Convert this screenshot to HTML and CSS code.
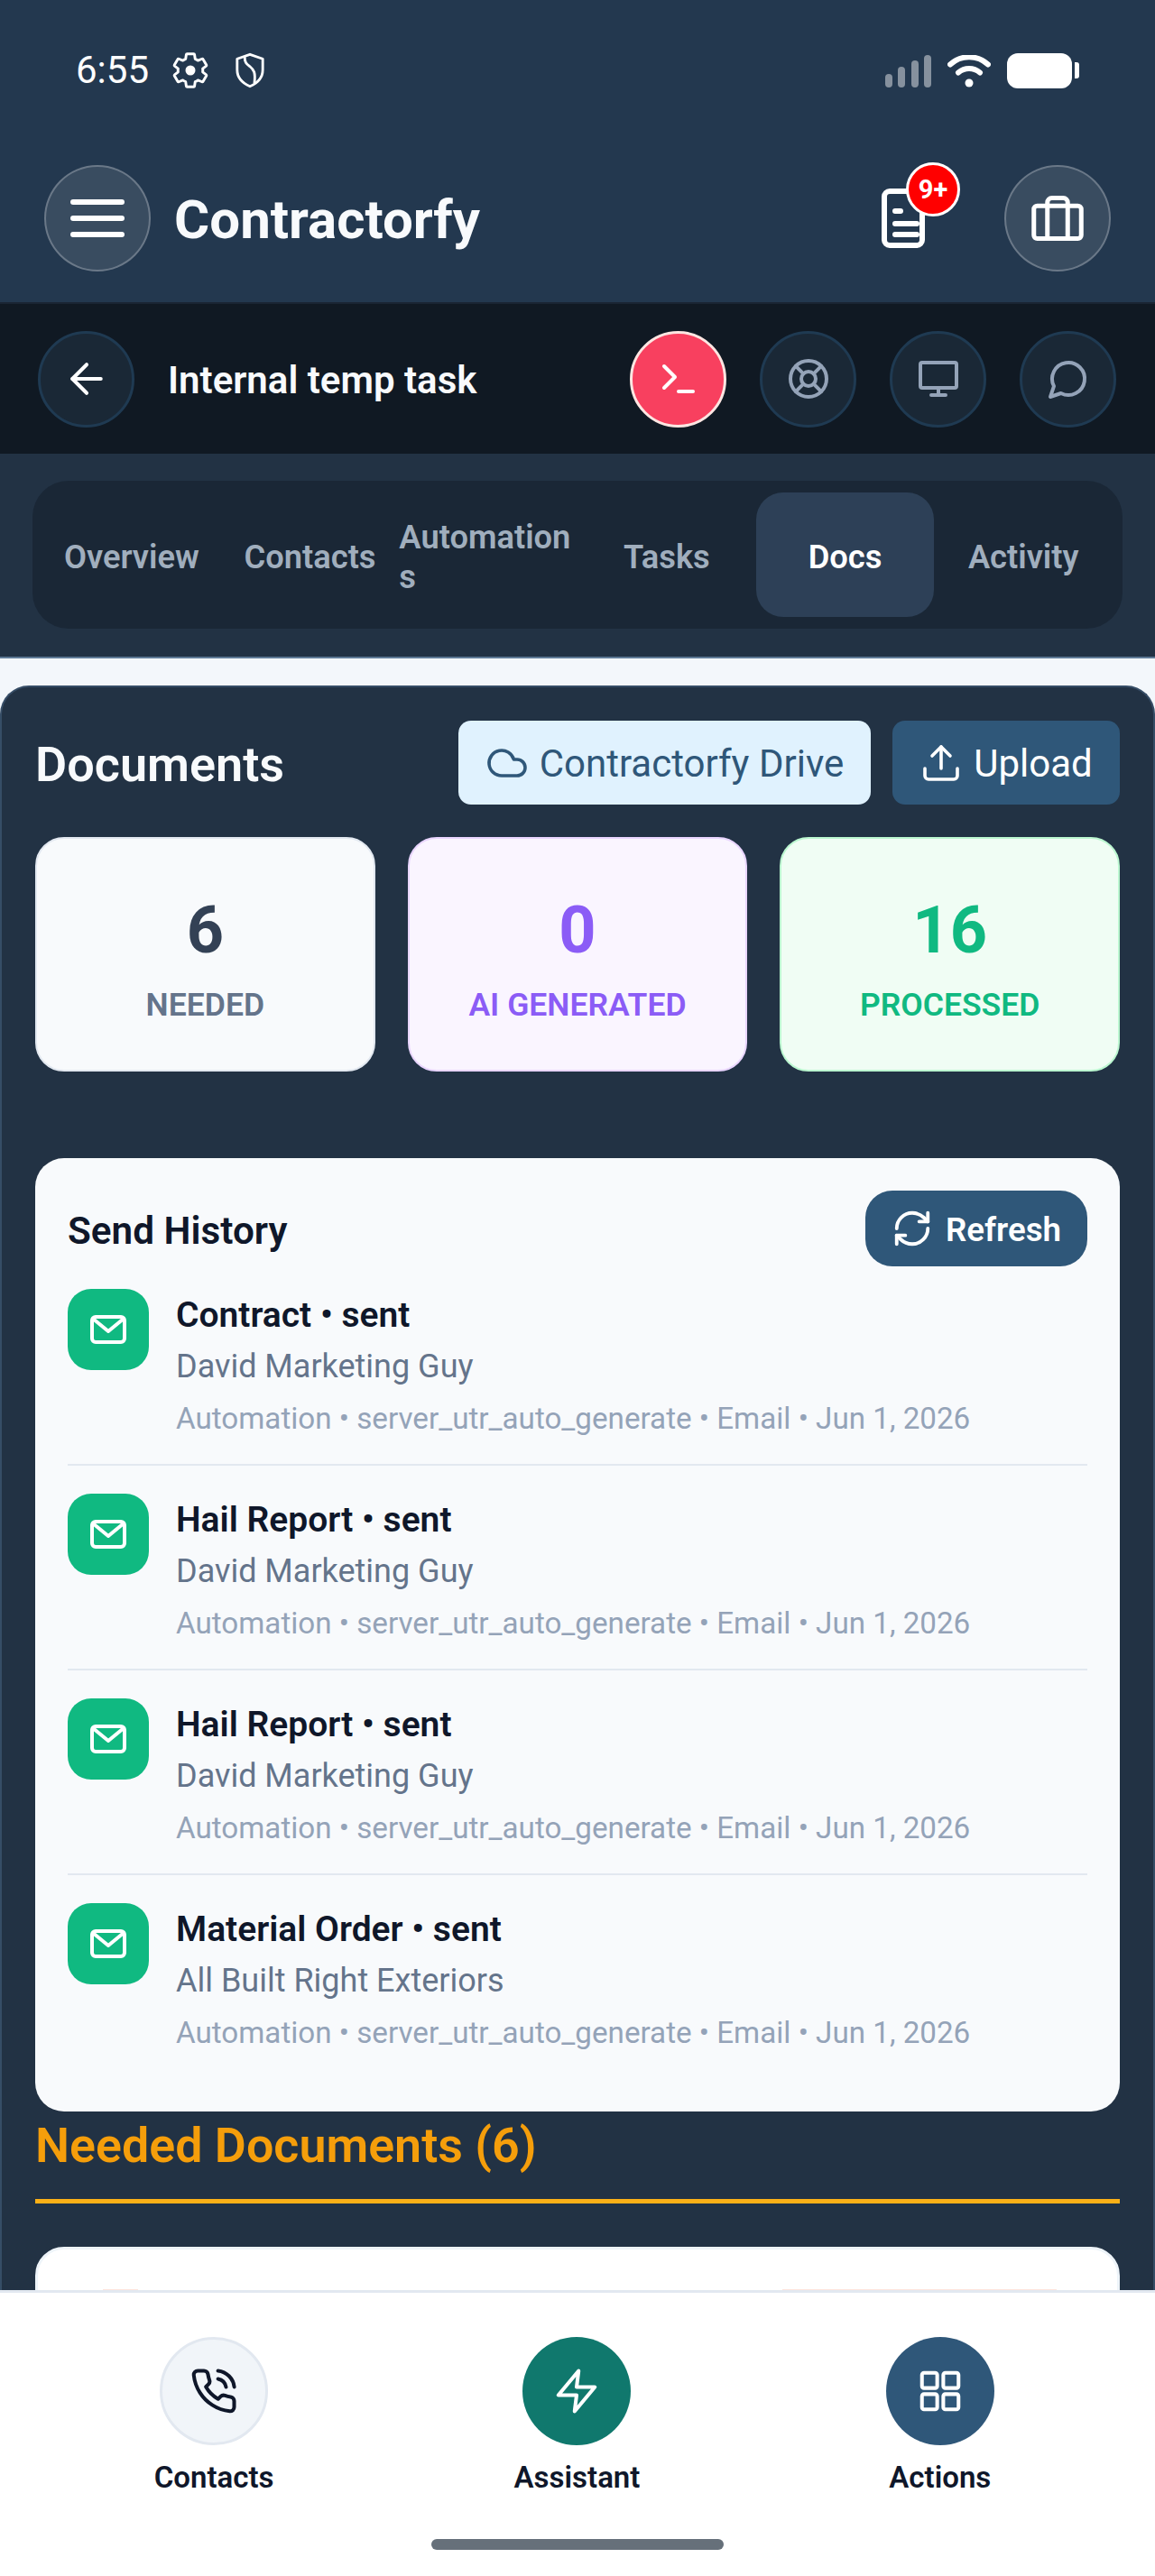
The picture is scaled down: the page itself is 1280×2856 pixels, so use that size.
FILE: index.html
```html
<!DOCTYPE html>
<html lang="en">
<head>
<meta charset="utf-8">
<title>Contractorfy</title>
<link rel="stylesheet" href="styles.css">
</head>
<body>
<header class="appbar">
  <div class="status">
    <span class="time">6:55</span>
    <svg class="st-gear" viewBox="0 0 24 24" fill="none" stroke="#fff" stroke-width="1.600" stroke-linejoin="round"><path d="M19.430 12.980c.04-.32.07-.64.07-.98s-.03-.66-.07-.98l2.110-1.650c.19-.15.24-.42.12-.64l-2-3.460c-.12-.22-.39-.3-.61-.22l-2.490 1c-.52-.4-1.080-.73-1.690-.98l-.38-2.650C14.460 2.180 14.250 2 14 2h-4c-.25 0-.46.18-.49.42l-.38 2.650c-.61.25-1.170.59-1.690.98l-2.490-1c-.23-.09-.49 0-.61.22l-2 3.460c-.13.22-.07.49.12.64l2.110 1.650c-.04.32-.07.65-.07.98s.03.66.07.98l-2.110 1.650c-.19.15-.24.42-.12.64l2 3.460c.12.22.39.3.61.22l2.490-1c.52.4 1.080.73 1.690.98l.38 2.650c.03.24.24.42.49.42h4c.25 0 .46-.18.49-.42l.38-2.650c.61-.25 1.170-.59 1.690-.98l2.490 1c.23.09.49 0 .61-.22l2-3.460c.12-.22.07-.49-.12-.64l-2.110-1.650z"/><circle cx="12" cy="12" r="3" fill="#fff" stroke="none"/></svg>
    <svg class="st-shield" viewBox="0 0 24 28" fill="none" stroke="#fff" stroke-width="2" stroke-linejoin="round"><path d="M12 1.500l10 3.500v8.500c0 6-4 10.500-10 13-6-2.500-10-7-10-13V5z"/><path d="M8 3.500c-.5 4 1.500 5.500 4 7.500 3 2.500 4.500 4.500 3.500 13"/></svg>
    <span class="status-gap"></span>
    <svg class="st-signal" viewBox="0 0 51 36"><g fill="#fff" fill-opacity=".45"><rect x="0" y="21" width="8" height="15" rx="4"/><rect x="14" y="13" width="8" height="23" rx="4"/><rect x="29" y="6" width="8" height="30" rx="4"/><rect x="43" y="0" width="8" height="36" rx="4"/></g></svg>
    <svg class="st-wifi" viewBox="0 0 48 36" fill="none" stroke="#fff" stroke-width="6" stroke-linecap="round"><path d="M3 10.500C15-.5 33-.5 45 10.500"/><path d="M12 19.500c7-6 17-6 24 0"/><circle cx="24" cy="31" r="4.500" fill="#fff" stroke="none"/></svg>
    <span class="battery"></span><span class="battery-nub"></span>
  </div>
  <div class="topbar">
    <button class="glass menu" aria-label="Menu"><span></span><span></span><span></span></button>
    <h1 class="brand">Contractorfy</h1>
    <span class="doc-wrap">
      <svg class="doc" viewBox="0 0 54 66" fill="none" stroke="#fff" stroke-width="6" stroke-linecap="round" stroke-linejoin="round"><path d="M3 9a6 6 0 0 1 6-6h36a6 6 0 0 1 0 0v54a6 6 0 0 1-6 6H9a6 6 0 0 1-6-6z"/><path d="M15 25h6M15 39h24M15 51h24"/></svg>
      <span class="badge">9+</span>
    </span>
    <button class="glass bag" aria-label="Briefcase">
      <svg class="ic60" viewBox="0 0 24 24" fill="none" stroke="#fff" stroke-width="2" stroke-linecap="round" stroke-linejoin="round"><rect x="1.500" y="6.500" width="21" height="14.500" rx="1.500"/><path d="M16.500 21V5a2 2 0 0 0-2-2h-5a2 2 0 0 0-2 2v16"/></svg>
    </button>
  </div>
</header>

<div class="subbar">
  <button class="round" aria-label="Back">
    <svg class="ic54" viewBox="0 0 24 24" fill="none" stroke="#fff" stroke-width="1.800" stroke-linecap="round" stroke-linejoin="round"><path d="M19 12H5"/><path d="M12 19l-7-7 7-7"/></svg>
  </button>
  <div class="job">Internal temp task</div>
  <button class="round hot" aria-label="Terminal">
    <svg class="ic48" viewBox="0 0 24 24" fill="none" stroke="#fff" stroke-width="2" stroke-linecap="round" stroke-linejoin="round"><path d="M4 17l6-6-6-6"/><path d="M12 19h8"/></svg>
  </button>
  <button class="round" aria-label="Support">
    <svg class="ic48" viewBox="0 0 24 24" fill="none" stroke="#94a3b8" stroke-width="2" stroke-linecap="round" stroke-linejoin="round"><circle cx="12" cy="12" r="10"/><circle cx="12" cy="12" r="4"/><path d="M4.930 4.930l4.240 4.240M14.830 14.830l4.240 4.240M14.830 9.170l4.240-4.240M4.930 19.070l4.240-4.240"/></svg>
  </button>
  <button class="round" aria-label="Monitor">
    <svg class="ic48" viewBox="0 0 24 24" fill="none" stroke="#94a3b8" stroke-width="2" stroke-linecap="round" stroke-linejoin="round"><rect x="2" y="3" width="20" height="14" rx="1"/><path d="M8 21h8M12 17v4"/></svg>
  </button>
  <button class="round" aria-label="Chat">
    <svg class="ic48" viewBox="0 0 24 24" fill="none" stroke="#94a3b8" stroke-width="2" stroke-linecap="round" stroke-linejoin="round"><path d="M7.900 20A9 9 0 1 0 4 16.100L2 22z"/></svg>
  </button>
</div>

<nav class="tabs-wrap">
  <div class="tabs">
    <span class="tab">Overview</span>
    <span class="tab">Contacts</span>
    <span class="tab">Automations</span>
    <span class="tab">Tasks</span>
    <span class="tab active">Docs</span>
    <span class="tab">Activity</span>
  </div>
</nav>

<main class="main">
  <section class="panel">
    <div class="panel-head">
      <h2 class="panel-title">Documents</h2>
      <button class="btn light">
        <svg class="ic48" viewBox="0 0 24 24" fill="none" stroke="#2f5779" stroke-width="1.800" stroke-linecap="round" stroke-linejoin="round"><path d="M17.500 19H9a7 7 0 1 1 6.710-9h1.790a4.500 4.500 0 1 1 0 9z"/></svg>
        <span class="btn-text">Contractorfy Drive</span>
      </button>
      <button class="btn solid">
        <svg class="ic48" viewBox="0 0 24 24" fill="none" stroke="#fff" stroke-width="1.800" stroke-linecap="round" stroke-linejoin="round"><path d="M21 15v4a2 2 0 0 1-2 2H5a2 2 0 0 1-2-2v-4"/><path d="M17 8l-5-5-5 5"/><path d="M12 3v12"/></svg>
        <span class="btn-text">Upload</span>
      </button>
    </div>

    <div class="stats">
      <div class="stat"><div class="num">6</div><div class="lbl">NEEDED</div></div>
      <div class="stat ai"><div class="num">0</div><div class="lbl">AI GENERATED</div></div>
      <div class="stat ok"><div class="num">16</div><div class="lbl">PROCESSED</div></div>
    </div>

    <div class="card history">
      <div class="card-head">
        <h3 class="card-title">Send History</h3>
        <button class="refresh">
          <svg class="ic46" viewBox="0 0 24 24" fill="none" stroke="#fff" stroke-width="2" stroke-linecap="round" stroke-linejoin="round"><path d="M3 12a9 9 0 0 1 9-9 9.750 9.750 0 0 1 6.740 2.740L21 8"/><path d="M21 3v5h-5"/><path d="M21 12a9 9 0 0 1-9 9 9.750 9.750 0 0 1-6.740-2.740L3 16"/><path d="M8 16H3v5"/></svg>
          <span>Refresh</span>
        </button>
      </div>

      <div class="row">
        <span class="tile"><svg class="ic48" viewBox="0 0 24 24" fill="none" stroke="#fff" stroke-width="2" stroke-linecap="round" stroke-linejoin="round"><rect x="3" y="5" width="18" height="14" rx="2"/><path d="M3.500 6l8.500 7 8.500-7"/></svg></span>
        <div class="row-text"><div class="r1">Contract • sent</div><div class="r2">David Marketing Guy</div><div class="r3">Automation • server_utr_auto_generate • Email • Jun 1, 2026</div></div>
      </div>
      <div class="row">
        <span class="tile"><svg class="ic48" viewBox="0 0 24 24" fill="none" stroke="#fff" stroke-width="2" stroke-linecap="round" stroke-linejoin="round"><rect x="3" y="5" width="18" height="14" rx="2"/><path d="M3.500 6l8.500 7 8.500-7"/></svg></span>
        <div class="row-text"><div class="r1">Hail Report • sent</div><div class="r2">David Marketing Guy</div><div class="r3">Automation • server_utr_auto_generate • Email • Jun 1, 2026</div></div>
      </div>
      <div class="row">
        <span class="tile"><svg class="ic48" viewBox="0 0 24 24" fill="none" stroke="#fff" stroke-width="2" stroke-linecap="round" stroke-linejoin="round"><rect x="3" y="5" width="18" height="14" rx="2"/><path d="M3.500 6l8.500 7 8.500-7"/></svg></span>
        <div class="row-text"><div class="r1">Hail Report • sent</div><div class="r2">David Marketing Guy</div><div class="r3">Automation • server_utr_auto_generate • Email • Jun 1, 2026</div></div>
      </div>
      <div class="row last">
        <span class="tile"><svg class="ic48" viewBox="0 0 24 24" fill="none" stroke="#fff" stroke-width="2" stroke-linecap="round" stroke-linejoin="round"><rect x="3" y="5" width="18" height="14" rx="2"/><path d="M3.500 6l8.500 7 8.500-7"/></svg></span>
        <div class="row-text"><div class="r1">Material Order • sent</div><div class="r2">All Built Right Exteriors</div><div class="r3">Automation • server_utr_auto_generate • Email • Jun 1, 2026</div></div>
      </div>
    </div>

    <h2 class="needed">Needed Documents (6)</h2>
    <div class="stub"><span class="chip-a"></span><span class="chip-b"></span></div>
  </section>
</main>

<footer class="bottom">
  <div class="bottom-grid">
    <div class="bitem">
      <span class="bcircle b-plain"><svg class="ic54" viewBox="0 0 24 24" fill="none" stroke="#0f172a" stroke-width="1.800" stroke-linecap="round" stroke-linejoin="round"><path d="M22 16.920v3a2 2 0 0 1-2.180 2 19.790 19.790 0 0 1-8.630-3.070 19.500 19.500 0 0 1-6-6 19.790 19.790 0 0 1-3.070-8.670A2 2 0 0 1 4.110 2h3a2 2 0 0 1 2 1.720 12.840 12.840 0 0 0 .7 2.810 2 2 0 0 1-.45 2.110L8.090 9.910a16 16 0 0 0 6 6l1.270-1.270a2 2 0 0 1 2.110-.45 12.840 12.840 0 0 0 2.810.7A2 2 0 0 1 22 16.920z"/><path d="M14.050 2a9 9 0 0 1 8 7.940"/><path d="M14.050 6A5 5 0 0 1 18 10"/></svg></span>
      <span class="blabel">Contacts</span>
    </div>
    <div class="bitem">
      <span class="bcircle b-green"><svg class="ic54" viewBox="0 0 24 24" fill="none" stroke="#fff" stroke-width="1.800" stroke-linecap="round" stroke-linejoin="round"><path d="M13 2L3 14h9l-1 8 10-12h-9l1-8z"/></svg></span>
      <span class="blabel">Assistant</span>
    </div>
    <div class="bitem">
      <span class="bcircle b-blue"><svg class="ic54" viewBox="0 0 24 24" fill="none" stroke="#fff" stroke-width="1.800" stroke-linecap="round" stroke-linejoin="round"><rect x="3" y="3" width="7.500" height="7.500" rx="1"/><rect x="13.500" y="3" width="7.500" height="7.500" rx="1"/><rect x="3" y="13.500" width="7.500" height="7.500" rx="1"/><rect x="13.500" y="13.500" width="7.500" height="7.500" rx="1"/></svg></span>
      <span class="blabel">Actions</span>
    </div>
  </div>
  <div class="pill"></div>
</footer>
</body>
</html>
```

FILE: styles.css
```css
* { box-sizing: border-box; }
html, body { margin: 0; padding: 0; }
body {
  width: 1280px;
  height: 2856px;
  overflow: hidden;
  display: flex;
  flex-direction: column;
  font-family: Roboto, "Liberation Sans", sans-serif;
  background: #f3f7fb;
}
h1, h2, h3 { margin: 0; }
button { font: inherit; padding: 0; border: 0; background: none; color: inherit; }
svg { display: block; flex: none; }
.ic46 { width: 46px; height: 46px; }
.ic48 { width: 48px; height: 48px; }
.ic54 { width: 54px; height: 54px; }
.ic60 { width: 60px; height: 60px; }

/* header */
.appbar { background: #23384f; height: 335px; padding-top: 58px; flex: none; }
.status { display: flex; align-items: center; height: 40px; padding: 0 84px 0 84px; color: #fff; }
.time { font-size: 42px; line-height: 40px; width: 105px; }
.st-gear { width: 44px; height: 44px; }
.st-shield { width: 34px; height: 40px; margin-left: 27px; }
.status-gap { flex: 1; }
.st-signal { width: 51px; height: 36px; margin-top: 2px; }
.st-wifi { width: 48px; height: 36px; margin-left: 18px; margin-top: 2px; }
.battery { width: 72px; height: 39px; border-radius: 12px; background: #fff; margin-left: 18px; }
.battery-nub { width: 5px; height: 18px; background: #fff; margin-left: 3px; border-radius: 0 3px 3px 0; }
.topbar { display: flex; align-items: center; margin-top: 85px; padding: 0 49px; }
.glass { width: 118px; height: 118px; border-radius: 50%; background: rgba(255,255,255,.1); border: 2px solid rgba(255,255,255,.25); display: flex; align-items: center; justify-content: center; flex: none; }
.menu { flex-direction: column; gap: 12px; }
.menu span { width: 60px; height: 6px; border-radius: 3px; background: #fff; }
.brand { flex: 1; margin-left: 26px; padding-top: 4px; font-size: 60px; line-height: 70px; font-weight: 700; color: #f8fafc; }
.doc-wrap { position: relative; width: 54px; height: 66px; margin-right: 82px; }
.doc { width: 54px; height: 66px; }
.badge { position: absolute; left: 27px; top: -29px; width: 60px; height: 60px; border-radius: 50%; background: #f00; border: 3px solid #fff; color: #fff; font-size: 29px; font-weight: 700; display: flex; align-items: center; justify-content: center; }

/* sub bar */
.subbar { background: #101923; height: 168px; flex: none; display: flex; align-items: center; padding: 0 43px 0 42px; gap: 37px; border-top: 2px solid #1a2533; }
.round { width: 107px; height: 107px; border-radius: 50%; background: #1a2836; border: 3px solid #1f3a52; display: flex; align-items: center; justify-content: center; flex: none; }
.hot { background: #f8405f; border-color: #fde6e2; }
.job { flex: 1; padding-top: 2px; color: #f8fafc; font-size: 42px; font-weight: 600; white-space: nowrap; }

/* tabs */
.tabs-wrap { background: #223244; height: 227px; flex: none; padding: 30px 36px 0; border-bottom: 2px solid #5f7a96; }
.tabs { display: flex; height: 164px; padding: 13px 11px; border-radius: 40px; background: #1a2736; }
.tab { flex: 1 1 0; min-width: 0; display: flex; align-items: center; justify-content: center; text-align: left; color: #a0aebd; font-size: 36.300px; line-height: 44px; font-weight: 600; overflow-wrap: anywhere; border-radius: 30px; padding-top: 6px; }
.tab.active { background: #2d4057; color: #fff; }

/* main */
.main { flex: 1; min-height: 0; overflow: hidden; padding-top: 30px; }
.panel { background: #223244; border: 2px solid #364d66; border-bottom: 0; border-radius: 32px 32px 0 0; padding: 37px 37px 0; height: 1800px; }
.panel-head { display: flex; align-items: center; gap: 24px; }
.panel-title { flex: 1; padding-top: 4px; font-size: 54px; font-weight: 600; color: #f8fafc; line-height: 89px; }
.btn { height: 93px; border-radius: 14px; display: flex; align-items: center; justify-content: center; font-size: 42px; gap: 12px; }
.btn-text { padding-top: 2px; }
.btn.light { width: 457px; background: #e0f2fe; color: #2f5779; }
.btn.solid { width: 252px; background: #2f5779; color: #fff; }

.stats { display: flex; gap: 36px; margin-top: 36px; }
.stat { flex: 1 1 0; height: 260px; border-radius: 32px; border: 2px solid #e2e8f0; background: #f8fafc; text-align: center; padding-top: 60px; }
.num { font-size: 72px; line-height: 84px; font-weight: 700; color: #334155; }
.lbl { font-size: 35.500px; line-height: 40px; font-weight: 600; color: #64748b; margin-top: 20px; }
.ai { background: #faf5ff; border-color: #e9d5ff; }
.ai .num, .ai .lbl { color: #8b5cf6; }
.ok { background: #f0fdf4; border-color: #bbf7d0; }
.ok .num, .ok .lbl { color: #10b981; }

/* cards */
.card { background: #f8fafc; border-radius: 32px; }
.history { margin-top: 96px; padding: 36px 36px 57px; height: 1057px; }
.card-head { display: flex; align-items: center; justify-content: space-between; height: 84px; margin-bottom: 25px; }
.card-title { padding-top: 4px; font-size: 42.300px; font-weight: 600; color: #0f172a; }
.refresh { width: 246px; height: 84px; border-radius: 30px; background: #2f5779; color: #fff; font-size: 36.700px; font-weight: 600; display: flex; align-items: center; justify-content: center; gap: 14px; }
.refresh span { padding-top: 2px; }
.row { display: flex; gap: 30px; padding-bottom: 22px; margin-bottom: 31px; border-bottom: 2px solid #e2e8f0; }
.row.last { border-bottom: 0; padding-bottom: 0; margin-bottom: 0; }
.tile { width: 90px; height: 90px; border-radius: 26px; background: #10b981; display: flex; align-items: center; justify-content: center; flex: none; }
.row-text { padding-top: 1px; line-height: 57px; white-space: nowrap; }
.r1 { font-size: 39px; font-weight: 600; color: #0f172a; }
.r2 { font-size: 36px; color: #64748b; }
.r3 { font-size: 33.200px; color: #94a3b8; }

.needed { font-size: 53.800px; line-height: 70px; font-weight: 600; color: #f59e0b; padding-top: 3px; padding-bottom: 24px; border-bottom: 5px solid #fbb017; }
.stub { margin-top: 48px; height: 200px; background: #fff; border: 3px solid #eef4f9; border-radius: 32px; display: flex; align-items: flex-start; justify-content: space-between; padding: 44px 67px 0 72px; }
.chip-a { width: 39px; height: 20px; background: #fde4dc; }
.chip-b { width: 304px; height: 20px; background: #fde4dc; }

/* bottom */
.bottom { flex: none; height: 317px; background: #fff; border-top: 3px solid #e2e8f0; padding: 49px 37px 0 36px; }
.bottom-grid { display: grid; grid-template-columns: repeat(3, 1fr); }
.bitem { display: flex; flex-direction: column; align-items: center; }
.bcircle { width: 120px; height: 120px; border-radius: 50%; display: flex; align-items: center; justify-content: center; }
.b-plain { background: #f1f5f9; border: 3px solid #e2e8f0; }
.b-green { background: #10786d; }
.b-blue { background: #2f5779; }
.blabel { font-size: 33px; line-height: 44px; font-weight: 600; color: #0f172a; margin-top: 14px; }
.pill { width: 324px; height: 12px; border-radius: 6px; background: #66707a; margin: 46px auto 0; }
```
